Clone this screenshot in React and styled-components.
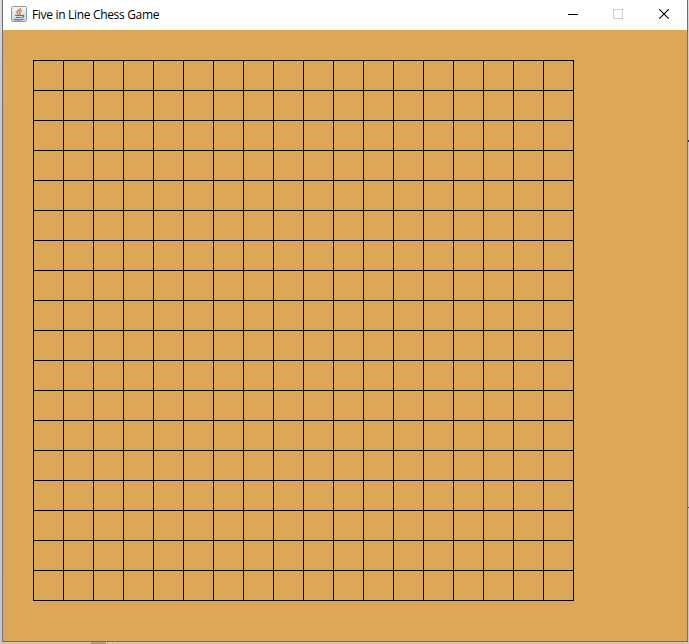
import React from 'react';
import styled, { createGlobalStyle } from 'styled-components';

const GlobalStyle = createGlobalStyle`
  *, *::before, *::after { box-sizing: border-box; }
  body { margin: 0; overflow: hidden; background: #cfcfcf; }
`;

const Desktop = styled.div`
  position: relative;
  width: 689px;
  height: 644px;
  padding: 0 1px 2px 2px;
  background: linear-gradient(180deg, #dedede, #cccccc 10%, #c8c8c8);
`;

const BackdropMark = styled.div`
  position: absolute;
  left: ${(p) => p.$x}px;
  top: ${(p) => p.$y}px;
  width: ${(p) => p.$w}px;
  height: ${(p) => p.$h}px;
  background: ${(p) => p.$color};
`;

const Window = styled.div`
  display: flex;
  flex-direction: column;
  width: 686px;
  height: 642px;
  border: 1px solid #707070;
  border-top: 0;
  background: #dca857;
`;

const TitleBar = styled.header`
  display: flex;
  align-items: center;
  flex: none;
  height: 30px;
  padding-left: 8px;
  background: #ffffff;
`;

const AppIcon = styled.svg`
  display: block;
  flex: none;
  width: 16px;
  height: 16px;
  margin-top: -2px;
`;

const Title = styled.h1`
  flex: 1;
  margin: 0 0 0 5px;
  font: 400 12px/30px "Open Sans", "Noto Sans", sans-serif;
  letter-spacing: -0.32px;
  white-space: nowrap;
  color: #000000;
`;

const CaptionButton = styled.button`
  display: flex;
  align-items: center;
  justify-content: center;
  width: 46px;
  height: 29px;
  padding: 0;
  border: 0;
  background: transparent;
  color: ${(p) => (p.disabled ? '#cccccc' : '#000000')};
`;

const Controls = styled.div`
  display: flex;
  align-self: flex-start;
`;

const Glyph = styled.svg`
  display: block;
  width: 11px;
  height: 11px;
  fill: none;
  stroke: currentColor;
`;

const BoardArea = styled.main`
  flex: 1;
  padding: 30px;
`;

const Board = styled.div`
  display: grid;
  grid-template-columns: repeat(18, 30px);
  grid-auto-rows: 30px;
  width: 541px;
  height: 541px;
  border: solid #000000;
  border-width: 1px 0 0 1px;
`;

const Cell = styled.div`
  border: solid #000000;
  border-width: 0 1px 1px 0;
`;

const MARKS = [
  { x: 91, y: 642, w: 15, h: 2, color: '#a0a0a0' },
  { x: 107, y: 642, w: 1, h: 2, color: '#b2b2b2' },
  { x: 112, y: 642, w: 1, h: 2, color: '#b8b8b8' },
  { x: 688, y: 140, w: 1, h: 2, color: '#173a8c' },
  { x: 688, y: 507, w: 1, h: 1, color: '#555555' },
];

function JavaIcon() {
  return (
    <AppIcon viewBox="0 0 16 16">
      <defs>
        <linearGradient id="tile" x1="0" y1="0" x2="0" y2="1">
          <stop offset="0" stopColor="#f6f6f6" />
          <stop offset="1" stopColor="#c9d5df" />
        </linearGradient>
      </defs>
      <rect x="0.5" y="0.5" width="15" height="15" rx="1" fill="url(#tile)" stroke="#8d99a2" />
      <path d="M9.3 2C9.8 4 5.500 4.600 6 6.500C6.200 7.500 7.300 8 7.300 8.500M11 4.300C8.500 5.300 8.300 6.100 8.800 6.800C9.300 7.500 9 8.200 8.500 8.600" fill="none" stroke="#e8731c" strokeWidth="1.4" />
      <path d="M4 9.500H11M5 11.500H10.300M11 9.500C13.500 8.700 13.300 11 11 11.400M3 13.300C4 14 10 14 12.500 13.200" fill="none" stroke="#44789c" strokeWidth="1.200" />
    </AppIcon>
  );
}

export default function App() {
  return (
    <Desktop>
      <GlobalStyle />
      {MARKS.map((m) => (
        <BackdropMark key={`${m.x}-${m.y}`} $x={m.x} $y={m.y} $w={m.w} $h={m.h} $color={m.color} />
      ))}
      <Window>
        <TitleBar>
          <JavaIcon />
          <Title>Five in Line Chess Game</Title>
          <Controls>
            <CaptionButton aria-label="Minimize">
              <Glyph viewBox="0 0 11 11"><path d="M1 5.500H11" /></Glyph>
            </CaptionButton>
            <CaptionButton aria-label="Maximize" disabled>
              <Glyph viewBox="0 0 11 11"><rect x="0.5" y="0.5" width="9" height="9" /></Glyph>
            </CaptionButton>
            <CaptionButton aria-label="Close">
              <Glyph viewBox="0 0 11 11"><path d="M0.300 0.300L9.700 9.700M9.700 0.300L0.300 9.700" strokeWidth="1.100" /></Glyph>
            </CaptionButton>
          </Controls>
        </TitleBar>
        <BoardArea>
          <Board>
            {Array.from({ length: 324 }, (_, i) => <Cell key={i} />)}
          </Board>
        </BoardArea>
      </Window>
    </Desktop>
  );
}
